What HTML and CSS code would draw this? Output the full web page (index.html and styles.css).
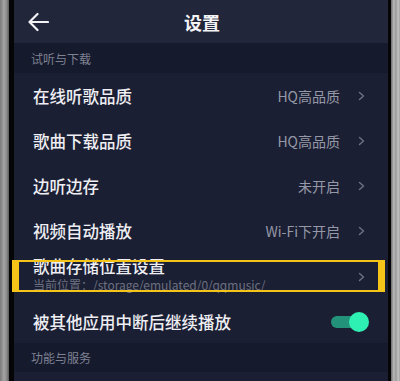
FILE: index.html
```html
<!DOCTYPE html>
<html lang="zh">
<head>
<meta charset="utf-8">
<link rel="stylesheet" href="styles.css">
</head>
<body>
<div class="frame">
  <div class="bezel bezel-left"></div>
  <div class="edge edge-left"></div>
  <div class="screen">
    <div class="header">
      <svg class="back" width="22" height="20" viewBox="0 0 22 20"><path d="M21 10H2.5M10.5 2L2.5 10l8 8" fill="none" stroke="#f2f2f5" stroke-width="2.2" stroke-linecap="round" stroke-linejoin="round"/></svg>
      <div class="title">设置</div>
    </div>
    <div class="section">试听与下载</div>
    <div class="row">
      <span class="label">在线听歌品质</span>
      <span class="value">HQ高品质</span>
      <svg class="chev" width="7" height="10" viewBox="0 0 7 10"><path d="M1.5 1.5L5.5 5l-4 3.5" fill="none" stroke="#6d7080" stroke-width="1.5" stroke-linecap="round" stroke-linejoin="round"/></svg>
    </div>
    <div class="row">
      <span class="label">歌曲下载品质</span>
      <span class="value">HQ高品质</span>
      <svg class="chev" width="7" height="10" viewBox="0 0 7 10"><path d="M1.5 1.5L5.5 5l-4 3.5" fill="none" stroke="#6d7080" stroke-width="1.5" stroke-linecap="round" stroke-linejoin="round"/></svg>
    </div>
    <div class="row">
      <span class="label">边听边存</span>
      <span class="value">未开启</span>
      <svg class="chev" width="7" height="10" viewBox="0 0 7 10"><path d="M1.5 1.5L5.5 5l-4 3.5" fill="none" stroke="#6d7080" stroke-width="1.5" stroke-linecap="round" stroke-linejoin="round"/></svg>
    </div>
    <div class="row">
      <span class="label">视频自动播放</span>
      <span class="value">Wi-Fi下开启</span>
      <svg class="chev" width="7" height="10" viewBox="0 0 7 10"><path d="M1.5 1.5L5.5 5l-4 3.5" fill="none" stroke="#6d7080" stroke-width="1.5" stroke-linecap="round" stroke-linejoin="round"/></svg>
    </div>
    <div class="row row-storage">
      <div class="stack">
        <span class="label">歌曲存储位置设置</span>
        <span class="sub">当前位置：/storage/emulated/0/qqmusic/</span>
      </div>
      <svg class="chev" width="7" height="10" viewBox="0 0 7 10"><path d="M1.5 1.5L5.5 5l-4 3.5" fill="none" stroke="#6d7080" stroke-width="1.5" stroke-linecap="round" stroke-linejoin="round"/></svg>
    </div>
    <div class="row row-toggle">
      <span class="label">被其他应用中断后继续播放</span>
      <div class="toggle"><div class="track"></div><div class="thumb"></div></div>
    </div>
    <div class="section section-2">功能与服务</div>
    <div class="row row-tail"></div>
  </div>
  <div class="edge edge-right"></div>
  <div class="bezel bezel-right"></div>
  <div class="highlight"></div>
</div>
</body>
</html>
```
FILE: styles.css
```css
html, body {
  margin: 0;
  padding: 0;
  background: #8c8c8c;
}
body {
  width: 400px;
  height: 381px;
  overflow: hidden;
  font-family: "Noto Sans CJK SC", "Noto Sans", sans-serif;
}
.frame {
  position: relative;
  display: flex;
  width: 400px;
  height: 381px;
}
.bezel-left {
  width: 9px;
  background: linear-gradient(90deg, #7a7a7a 0%, #a4a4a4 45%, #8a8a8a 75%, #5a5a5a 100%);
}
.bezel-right {
  width: 9px;
  background: linear-gradient(90deg, #6a6a6a 0%, #b8b8b8 30%, #9a9a9a 55%, #c4c4c4 80%, #a0a0a0 100%);
}
.edge-left {
  width: 5px;
  background: #050507;
}
.edge-right {
  width: 3px;
  background: #050507;
}
.screen {
  flex: 1;
  display: flex;
  flex-direction: column;
  background: #1b1f33;
  overflow: hidden;
}
.header {
  height: 43px;
  flex: none;
  background: #21263a;
  display: flex;
  align-items: center;
  position: relative;
}
.back {
  margin-left: 13px;
  margin-top: 1px;
}
.title {
  position: absolute;
  left: 0;
  right: 0;
  top: 0;
  height: 43px;
  line-height: 45px;
  text-align: center;
  padding-left: 2px;
  color: #f4f4f7;
  font-size: 18px;
  font-weight: bold;
}
.section {
  height: 30px;
  flex: none;
  background: #161a2d;
  color: #7f8293;
  font-size: 12px;
  line-height: 31px;
  padding-left: 17px;
}
.section-2 {
  height: 29px;
  line-height: 29px;
}
.row {
  height: 45px;
  flex: none;
  display: flex;
  align-items: center;
  padding: 0 23px 0 19px;
}
.label {
  flex: 1;
  color: #eeeef3;
  font-size: 16.5px;
  font-weight: 500;
  line-height: 20px;
  white-space: nowrap;
}
.value {
  color: #9598a6;
  font-size: 14px;
  margin-right: 18px;
}
.chev {
  flex: none;
}
.row-storage {
  height: 47px;
  align-items: flex-start;
  padding-top: 4px;
  box-sizing: border-box;
}
.row-storage .chev {
  align-self: center;
  margin-top: -4px;
}
.stack {
  flex: 1;
  display: flex;
  flex-direction: column;
}
.stack .label {
  flex: none;
  line-height: 18px;
}
.sub {
  color: #6c6f80;
  font-size: 12px;
  line-height: 20px;
  white-space: nowrap;
}
.row-toggle {
  height: 43px;
  padding-right: 19px;
}
.toggle {
  position: relative;
  width: 38px;
  height: 20px;
  flex: none;
}
.track {
  position: absolute;
  left: 0;
  top: 4px;
  width: 32px;
  height: 12px;
  border-radius: 6px;
  background: #23927a;
}
.thumb {
  position: absolute;
  right: 0;
  top: 0;
  width: 20px;
  height: 20px;
  border-radius: 50%;
  background: #2ff0b3;
}
.row-tail {
  flex: 1;
}
.highlight {
  position: absolute;
  left: 12px;
  top: 260px;
  width: 359px;
  height: 28px;
  border-style: solid;
  border-color: #f5c419;
  border-width: 2px 7px;
}
```
